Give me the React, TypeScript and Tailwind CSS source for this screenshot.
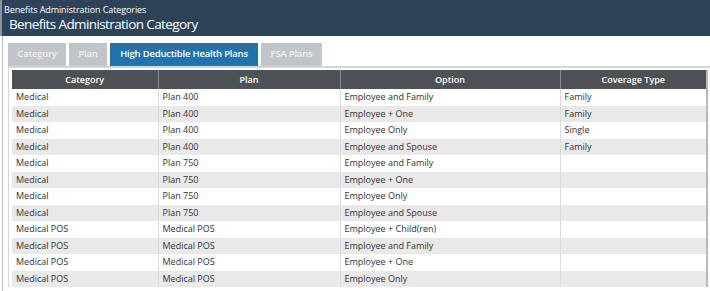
import React from 'react';

const rows = [
  ['Medical', 'Plan 400', 'Employee and Family', 'Family'],
  ['Medical', 'Plan 400', 'Employee + One', 'Family'],
  ['Medical', 'Plan 400', 'Employee Only', 'Single'],
  ['Medical', 'Plan 400', 'Employee and Spouse', 'Family'],
  ['Medical', 'Plan 750', 'Employee and Family', ''],
  ['Medical', 'Plan 750', 'Employee + One', ''],
  ['Medical', 'Plan 750', 'Employee Only', ''],
  ['Medical', 'Plan 750', 'Employee and Spouse', ''],
  ['Medical POS', 'Medical POS', 'Employee + Child(ren)', ''],
  ['Medical POS', 'Medical POS', 'Employee and Family', ''],
  ['Medical POS', 'Medical POS', 'Employee + One', ''],
  ['Medical POS', 'Medical POS', 'Employee Only', ''],
];

const tabs = [
  { label: 'Category', w: 'w-[58px]' },
  { label: 'Plan', w: 'w-[38px]' },
  { label: 'High Deductible Health Plans', w: 'w-[148px]', active: true },
  { label: 'FSA Plans', w: 'w-[61px]' },
];

const cols = ['w-[146px]', 'w-[182px]', 'w-[220px]', 'w-[147px]'];

export default function App() {
  return (
    <div className="w-[710px] h-[291px] overflow-hidden bg-white font-['Open_Sans',sans-serif]">
      {/* Header */}
      <div className="h-[36px] bg-[#2c4359] border-l-2 border-[#8a97a3] text-white">
        <div className="pl-[2px] pt-[4px] text-[9px] leading-[11px] tracking-[-0.1px]">Benefits Administration Categories</div>
        <div className="pl-[7px] text-[13.5px] leading-[18px] tracking-[-0.6px]">Benefits Administration Category</div>
      </div>

      <div className="ml-[2px] border-l border-[#b8b8b8] h-full pl-[5px]">
        {/* Tabs */}
        <div className="flex gap-[3px] pt-[7px]">
          {tabs.map((t) => (
            <div
              key={t.label}
              className={`${t.w} h-[23px] flex items-center justify-center text-[9.5px] font-semibold tracking-[-0.2px] ${
                t.active ? 'bg-[#2173ad] text-white' : 'bg-[#c1c5c7] text-[#eef0f1]'
              }`}
            >
              {t.label}
            </div>
          ))}
        </div>

        {/* Panel */}
        <div className="border-t-2 border-l border-[#d6d6d6] pl-[3px] pt-[2px]">
          <table className="border-collapse table-fixed text-[9px] text-[#333] border-r-2 border-[#b9b9b9]">
            <thead>
              <tr className="bg-[#4d5254] text-white h-[19px]">
                {['Category', 'Plan', 'Option', 'Coverage Type'].map((h, i) => (
                  <th
                    key={h}
                    className={`${cols[i]} font-semibold text-center border-r border-[#8a8d8f] last:border-r-0 p-0`}
                  >
                    {h}
                  </th>
                ))}
              </tr>
            </thead>
            <tbody>
              {rows.map((r, ri) => (
                <tr key={ri} className={`h-[16.5px] ${ri % 2 ? 'bg-[#e9e9e9]' : 'bg-white'}`}>
                  {r.map((c, ci) => (
                    <td
                      key={ci}
                      className={`${cols[ci]} px-[4px] py-0 leading-[16px] border-r border-[#dcdcdc] last:border-r-0`}
                    >
                      {c}
                    </td>
                  ))}
                </tr>
              ))}
            </tbody>
          </table>
        </div>
      </div>
    </div>
  );
}
